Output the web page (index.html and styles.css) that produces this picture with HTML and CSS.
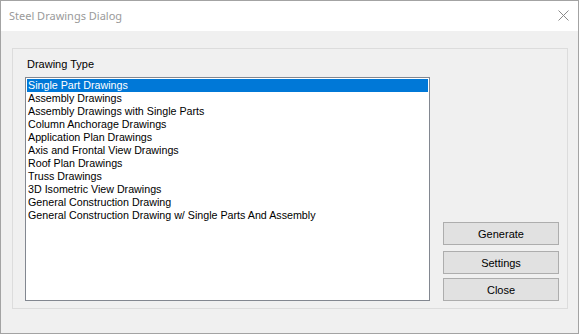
FILE: index.html
```html
<!DOCTYPE html>
<html lang="en">
<head>
    <meta charset="UTF-8">
    <title>Steel Drawings Dialog</title>
    <link rel="stylesheet" href="styles.css">
</head>
<body>
    <div class="dialog">
        <!-- Title bar -->
        <div class="title-bar">
            <span class="title">Steel Drawings Dialog</span>
            <svg class="close-x" width="11" height="11" viewBox="0 0 11 11">
                <path d="M0.5 0.5 L10.5 10.5 M10.5 0.5 L0.5 10.5" stroke="#8a8a8a" stroke-width="1" fill="none"/>
            </svg>
        </div>

        <div class="content">
            <div class="group">
                <div class="list-column">
                    <div class="label">Drawing Type</div>
                    <ul class="listbox">
                        <li class="item selected">Single Part Drawings</li>
                        <li class="item">Assembly Drawings</li>
                        <li class="item">Assembly Drawings with Single Parts</li>
                        <li class="item">Column Anchorage Drawings</li>
                        <li class="item">Application Plan Drawings</li>
                        <li class="item">Axis and Frontal View Drawings</li>
                        <li class="item">Roof Plan Drawings</li>
                        <li class="item">Truss Drawings</li>
                        <li class="item">3D Isometric View Drawings</li>
                        <li class="item">General Construction Drawing</li>
                        <li class="item">General Construction Drawing w/ Single Parts And Assembly</li>
                    </ul>
                </div>

                <div class="button-column">
                    <button class="btn btn-generate">Generate</button>
                    <button class="btn btn-settings">Settings</button>
                    <button class="btn">Close</button>
                </div>
            </div>
        </div>
    </div>
</body>
</html>
```

FILE: styles.css
```css
* {
    margin: 0;
    padding: 0;
    box-sizing: border-box;
}

body {
    width: 580px;
    height: 334px;
    overflow: hidden;
    background: #ffffff;
    font-family: 'Liberation Sans', Arial, sans-serif;
    font-size: 11px;
    color: #000000;
}

.dialog {
    width: 579px;
    height: 334px;
    border: 1px solid #a3a3a3;
    display: flex;
    flex-direction: column;
    background: #f0f0f0;
}

.title-bar {
    height: 30px;
    background: #ffffff;
    display: flex;
    align-items: center;
    justify-content: space-between;
    padding: 0 9px 0 8px;
    flex-shrink: 0;
}

.title {
    font-family: 'Noto Sans', 'Open Sans', sans-serif;
    font-size: 11px;
    color: #9a9a9a;
    margin-top: -2px;
}

.close-x {
    margin-top: -1px;
}

.content {
    flex: 1;
    padding: 17px 10px 0 11px;
}

.group {
    height: 261px;
    border: 1px solid #dcdcdc;
    display: flex;
    padding: 0 9px 7px 12px;
    gap: 13px;
}

.list-column {
    display: flex;
    flex-direction: column;
}

.label {
    height: 28px;
    padding: 9px 0 0 2px;
    line-height: 13px;
}

.listbox {
    list-style: none;
    width: 405px;
    height: 224px;
    border: 1px solid #828790;
    background: #ffffff;
    padding: 1px;
}

.item {
    height: 13px;
    line-height: 13px;
    padding-left: 1px;
    font-size: 10.7px;
    white-space: nowrap;
}

.item.selected {
    background: #0078d7;
    color: #ffffff;
}

.button-column {
    flex: 1;
    display: flex;
    flex-direction: column;
    justify-content: flex-end;
}

.btn {
    height: 23px;
    width: 116px;
    background: #e1e1e1;
    border: 1px solid #adadad;
    font-family: 'Liberation Sans', Arial, sans-serif;
    font-size: 11px;
    color: #000000;
}

.btn-generate {
    margin-bottom: 6px;
}

.btn-settings {
    margin-bottom: 4px;
}
```
